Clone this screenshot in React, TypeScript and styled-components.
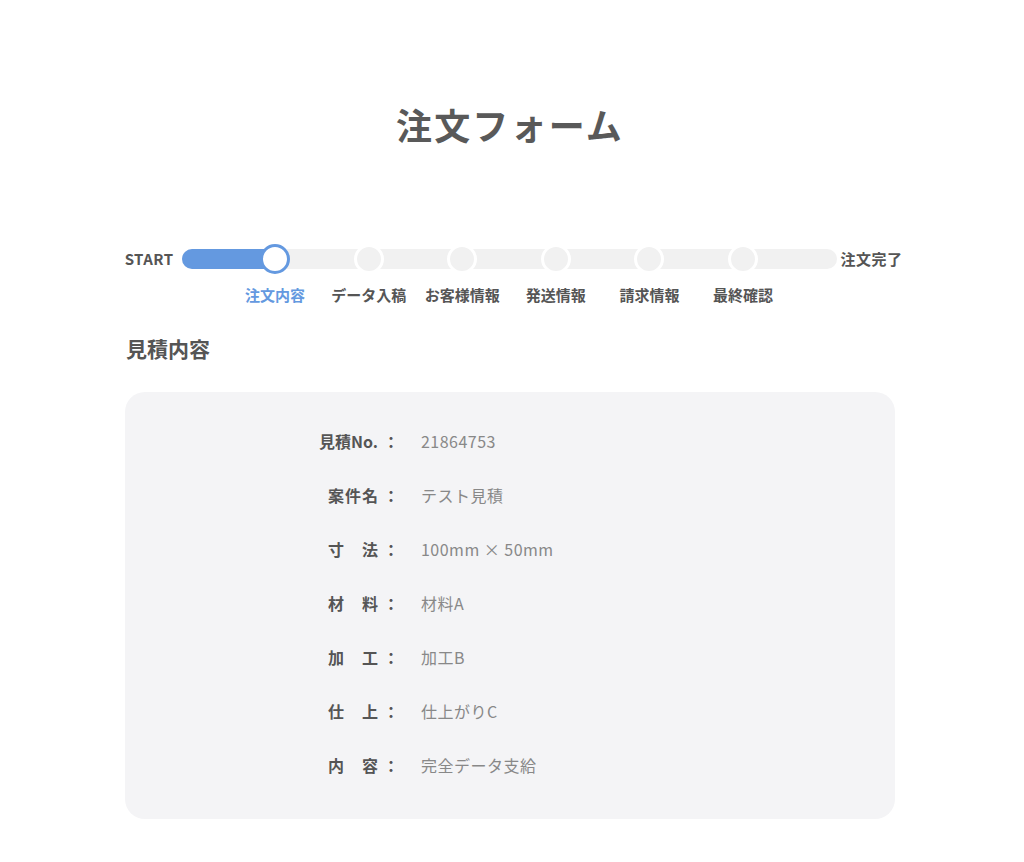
import styled, { createGlobalStyle } from 'styled-components';

const GlobalStyle = createGlobalStyle`
  body {
    margin: 0;
    background: #fff;
    font-family: 'Noto Sans CJK JP', 'Noto Sans', sans-serif;
    color: #555;
  }
`;

const steps = ['注文内容', 'データ入稿', 'お客様情報', '発送情報', '請求情報', '最終確認'];
const current = 0;

const estimate = [
  { label: '見積No.', value: '21864753' },
  { label: '案件名', value: 'テスト見積' },
  { label: '寸法', value: '100mm × 50mm' },
  { label: '材料', value: '材料A' },
  { label: '加工', value: '加工B' },
  { label: '仕上', value: '仕上がりC' },
  { label: '内容', value: '完全データ支給' },
];

// position of step n (1-based) along the track, in %
const stepPos = (n: number) => (n / (steps.length + 1)) * 100;

function App() {
  return (
    <Page>
      <GlobalStyle />
      <Title>注文フォーム</Title>

      <Progress>
        <EndLabel>START</EndLabel>
        <TrackArea>
          <Track>
            <Fill style={{ width: `${stepPos(current + 1)}%` }} />
            {steps.map((step, i) => (
              <Dot key={step} active={i === current} style={{ left: `${stepPos(i + 1)}%` }} />
            ))}
          </Track>
          <StepLabels>
            {steps.map((step, i) => (
              <StepLabel key={step} active={i === current} style={{ left: `${stepPos(i + 1)}%` }}>
                {step}
              </StepLabel>
            ))}
          </StepLabels>
        </TrackArea>
        <EndLabel last>注文完了</EndLabel>
      </Progress>

      <Section>
        <Heading>見積内容</Heading>
        <Card>
          <Table>
            {estimate.map((row) => (
              <Row key={row.label}>
                <Label spread={row.label.length <= 3}>{row.label}</Label>
                <Colon>：</Colon>
                <Value>{row.value}</Value>
              </Row>
            ))}
          </Table>
        </Card>
      </Section>
    </Page>
  );
}

export default App;

const Page = styled.div`
  padding: 97px 4px 43px 0;
  display: flex;
  flex-direction: column;
  align-items: center;
`;

const Title = styled.h1`
  margin: 0;
  font-size: 36px;
  line-height: 54px;
  font-weight: 700;
  letter-spacing: 0.06em;
  color: #595959;
`;

const Progress = styled.div`
  margin-top: 98px;
  margin-left: 7px;
  display: flex;
  align-items: flex-start;
`;

const EndLabel = styled.div<{ last?: boolean }>`
  margin: ${(p) => (p.last ? '0 0 0 4px' : '0 8px 0 0')};
  font-size: 15px;
  font-weight: 700;
  line-height: 20px;
  letter-spacing: 0.03em;
  color: #555;
  white-space: nowrap;
`;

const TrackArea = styled.div`
  width: 655px;
`;

const Track = styled.div`
  position: relative;
  height: 20px;
  border-radius: 10px;
  background: #f1f1f1;
`;

const Fill = styled.div`
  height: 100%;
  border-radius: 10px 0 0 10px;
  background: #6499e0;
`;

const Dot = styled.span<{ active: boolean }>`
  position: absolute;
  top: 50%;
  width: 30px;
  height: 30px;
  box-sizing: border-box;
  border-radius: 50%;
  transform: translate(-50%, -50%);
  background: ${(p) => (p.active ? '#fff' : '#f1f1f1')};
  border: 3px solid ${(p) => (p.active ? '#6499e0' : '#fff')};
`;

const StepLabels = styled.div`
  position: relative;
  height: 20px;
  margin-top: 16px;
`;

const StepLabel = styled.span<{ active: boolean }>`
  position: absolute;
  top: 0;
  transform: translateX(-50%);
  white-space: nowrap;
  font-size: 15px;
  line-height: 20px;
  font-weight: 700;
  color: ${(p) => (p.active ? '#6499e0' : '#555')};
`;

const Section = styled.section`
  width: 770px;
  margin-top: 28px;
`;

const Heading = styled.h2`
  margin: 0 0 29px 1px;
  font-size: 21px;
  line-height: 30px;
  font-weight: 700;
  color: #555;
`;

const Card = styled.div`
  background: #f4f4f6;
  border-radius: 20px;
  padding: 37px 0 42px;
`;

const Table = styled.div`
  display: grid;
  grid-template-columns: 253px 43px 1fr;
  row-gap: 30px;
`;

const Row = styled.div`
  display: contents;
`;

const Label = styled.span<{ spread: boolean }>`
  justify-self: end;
  font-size: 16px;
  line-height: 24px;
  font-weight: 700;
  color: #555;
  white-space: nowrap;
  ${(p) =>
    p.spread &&
    `
    width: 50px;
    text-align: justify;
    text-align-last: justify;
  `}
`;

const Colon = styled.span`
  font-size: 16px;
  line-height: 24px;
  font-weight: 700;
  color: #555;
  padding-left: 5px;
`;

const Value = styled.span`
  font-size: 16px;
  line-height: 24px;
  letter-spacing: 0.03em;
  color: #888;
`;
